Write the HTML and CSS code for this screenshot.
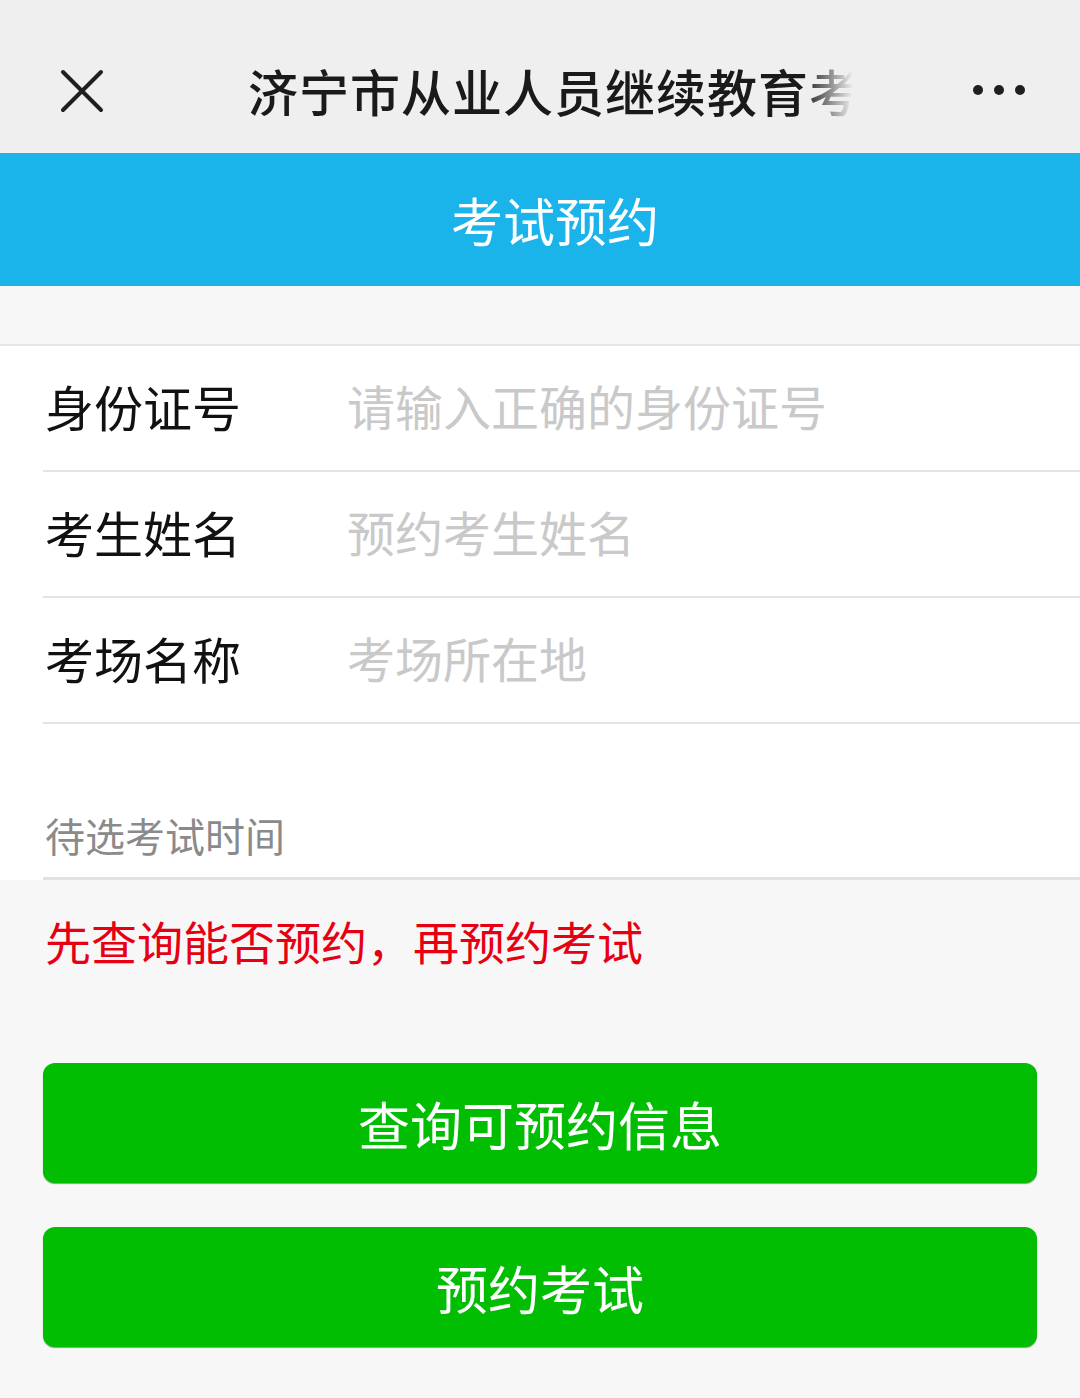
FILE: index.html
```html
<!DOCTYPE html>
<html lang="zh-CN">
<head>
    <meta charset="UTF-8">
    <meta name="viewport" content="width=device-width, initial-scale=1.0">
    <title>考试预约</title>
    <link rel="stylesheet" href="styles.css">
</head>
<body>
    <div class="topbar">
        <div class="close">
            <svg width="44" height="44" viewBox="0 0 44 44">
                <path d="M3 3 L41 41 M41 3 L3 41" stroke="#1f1f1f" stroke-width="4" stroke-linecap="round" fill="none"/>
            </svg>
        </div>
        <div class="title">济宁市从业人员继续教育考</div>
        <div class="more">
            <span></span><span></span><span></span>
        </div>
    </div>

    <div class="header">考试预约</div>

    <div class="gap"></div>

    <div class="form">
        <div class="row">
            <label>身份证号</label>
            <input type="text" placeholder="请输入正确的身份证号">
        </div>
        <div class="row">
            <label>考生姓名</label>
            <input type="text" placeholder="预约考生姓名">
        </div>
        <div class="row">
            <label>考场名称</label>
            <input type="text" placeholder="考场所在地">
        </div>
        <div class="times">待选考试时间</div>
    </div>

    <div class="notice">先查询能否预约，再预约考试</div>

    <div class="buttons">
        <button class="button">查询可预约信息</button>
        <button class="button">预约考试</button>
    </div>
</body>
</html>
```

FILE: styles.css
```css
body {
    margin: 0;
    font-family: "Noto Sans CJK SC", "Noto Sans", sans-serif;
    background-color: #f7f7f7;
    width: 1080px;
    min-height: 1398px;
}
.topbar {
    height: 153px;
    box-sizing: border-box;
    padding-top: 26px;
    background-color: #efefef;
    display: flex;
    align-items: center;
}
.close {
    width: 188px;
    padding-left: 60px;
    display: flex;
    align-items: center;
    padding-top: 2px;
}
.title {
    white-space: nowrap;
    font-size: 50px;
    font-weight: 500;
    color: #1a1a1a;
    letter-spacing: 1px;
    -webkit-mask-image: linear-gradient(to right, #000 555px, transparent 605px);
    mask-image: linear-gradient(to right, #000 555px, transparent 605px);
}
.more {
    margin-left: auto;
    margin-right: 55px;
    display: flex;
    gap: 11px;
}
.more span {
    width: 10px;
    height: 10px;
    border-radius: 50%;
    background-color: #1f1f1f;
}
.header {
    height: 133px;
    padding-left: 30px;
    background-color: #1ab3ea;
    color: white;
    font-size: 52px;
    display: flex;
    align-items: center;
    justify-content: center;
}
.gap {
    height: 58px;
    border-bottom: 2px solid #e6e6e6;
}
.form {
    background: white;
}
.row {
    height: 124px;
    margin-left: 43px;
    border-bottom: 2px solid #e4e4e4;
    display: flex;
    align-items: center;
}
.row label {
    width: 302px;
    padding-left: 2px;
    padding-bottom: 6px;
    font-size: 49px;
    color: #111;
}
.row input {
    flex: 1;
    border: none;
    outline: none;
    background: transparent;
    font-family: inherit;
    font-size: 48px;
    padding: 0 0 6px 0;
    color: #111;
}
.row input::placeholder {
    color: #c9c9c9;
}
.times {
    height: 156px;
    box-sizing: border-box;
    margin-left: 43px;
    padding-left: 2px;
    padding-bottom: 13px;
    border-bottom: 3px solid #e2e2e2;
    font-size: 40px;
    color: #8a8a8a;
    display: flex;
    align-items: flex-end;
}
.notice {
    padding: 27px 0 0 45px;
    height: 148px;
    box-sizing: border-box;
    font-size: 46px;
    color: #e60012;
}
.buttons {
    padding: 35px 43px 0 43px;
    display: flex;
    flex-direction: column;
    gap: 44px;
}
.button {
    height: 120px;
    border: none;
    border-radius: 12px;
    background-color: #02be02;
    box-shadow: 0 1px 1px rgba(0, 80, 0, 0.5);
    color: white;
    font-family: inherit;
    font-size: 52px;
    cursor: pointer;
}
```
